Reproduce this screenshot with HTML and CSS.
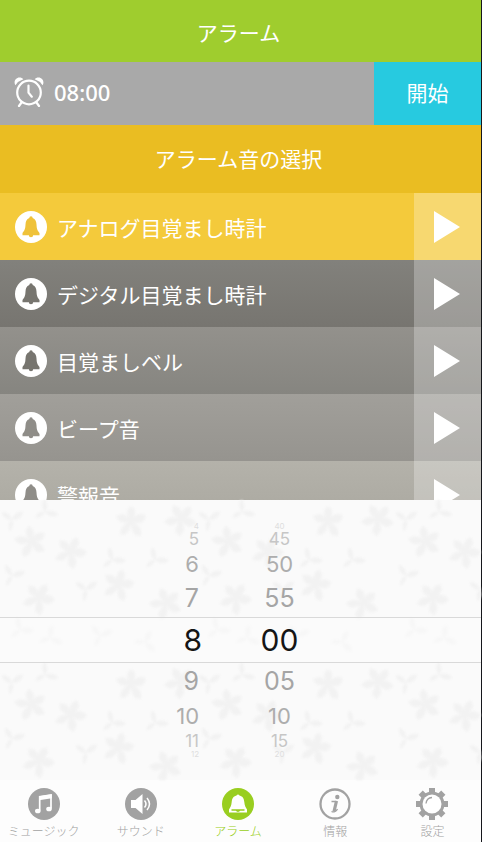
FILE: index.html
```html
<!DOCTYPE html>
<html lang="ja">
<head>
<meta charset="utf-8">
<meta name="viewport" content="width=device-width, initial-scale=1">
<title>アラーム</title>
<link rel="stylesheet" href="styles.css">
</head>
<body>
<svg class="defs" aria-hidden="true">
  <symbol id="bell" viewBox="0 0 32 32">
    <circle cx="16" cy="16" r="16" fill="#fff"/>
    <path fill="currentColor" d="M14.300 7a1.700 1.700 0 0 1 3.400 0c2.700 1.200 3.600 3.300 3.800 6.500.2 4.500 1 6 3 8.500v2.200H7.500V22c2-2.500 2.800-4 3-8.500.2-3.200 1.100-5.300 3.800-6.500zM13.800 24h4.400a2.200 2.200 0 0 1-4.400 0z"/>
  </symbol>
  <symbol id="play" viewBox="0 0 26 32"><path fill="#fff" d="M0 0 26 16 0 32z"/></symbol>
</svg>
<div class="app">
  <header class="title"><h1>アラーム</h1></header>
  <div class="timer">
    <div class="time">
      <svg class="clock" viewBox="0 0 30 30" aria-hidden="true">
        <g fill="none" stroke="#fff" stroke-linecap="round">
          <circle cx="15" cy="15.500" r="11.800" stroke-width="2.200"/>
          <path stroke-width="2.200" d="M14.500 8.500v7.200l3.300 4M7.500 25.500 5 29M22.500 25.500 25 29"/>
        </g>
        <path fill="#fff" d="M1.500 8.200C-.8 5 1.500.5 5.500.5c1.500 0 3 .6 3.800 1.800A15 15 0 0 0 1.500 8.200zM28.500 8.200C30.800 5 28.500.5 24.500.5c-1.500 0-3 .6-3.800 1.800a15 15 0 0 1 7.800 5.900z"/>
      </svg>
      <time>08:00</time>
    </div>
    <button class="start" type="button">開始</button>
  </div>
  <h2 class="heading">アラーム音の選択</h2>
  <ul class="sounds">
    <li class="sound sound-active"><button class="pick" type="button"><svg class="bell"><use href="#bell"/></svg>アナログ目覚まし時計</button><button class="play" type="button" aria-label="再生"><svg><use href="#play"/></svg></button></li>
    <li class="sound sound-dark"><button class="pick" type="button"><svg class="bell"><use href="#bell"/></svg>デジタル目覚まし時計</button><button class="play" type="button" aria-label="再生"><svg><use href="#play"/></svg></button></li>
    <li class="sound sound-mid"><button class="pick" type="button"><svg class="bell"><use href="#bell"/></svg>目覚ましベル</button><button class="play" type="button" aria-label="再生"><svg><use href="#play"/></svg></button></li>
    <li class="sound sound-light"><button class="pick" type="button"><svg class="bell"><use href="#bell"/></svg>ビープ音</button><button class="play" type="button" aria-label="再生"><svg><use href="#play"/></svg></button></li>
    <li class="sound sound-pale"><button class="pick" type="button"><svg class="bell"><use href="#bell"/></svg>警報音</button><button class="play" type="button" aria-label="再生"><svg><use href="#play"/></svg></button></li>
  </ul>
  <section class="picker">
    <svg class="floral" aria-hidden="true">
      <defs>
        <g id="flower">
          <path d="M0-1Q-6-8-3-14L0-17 4-13Q5-6 0-1Q4-9 10-9L15-8 13-2Q8 2 0-1Q8 1 10 7L10 13 4 12Q0 7 0-1Q0 7-5 11L-11 12-10 6Q-7 0 0-1Q-8 1-12-2L-15-7-9-9Q-3-8 0-1z"/>
          <circle r="3"/>
        </g>
        <path id="leaf" d="M0 0C-6 0-10-4-10-8-5-8-1-5 0 0 2-7 7-9 11-8 10-3 6 0 0 0c2 4 1 8-2 11-2-4-2-8 2-11z"/>
        <pattern id="flowers" width="197" height="163" patternUnits="userSpaceOnUse">
          <g fill="#f2f2f2">
            <use href="#flower" x="131" y="23"/>
            <use href="#flower" transform="translate(180 20) rotate(40)"/>
            <use href="#flower" transform="translate(70 53) rotate(25)"/>
            <use href="#flower" transform="translate(30 42) rotate(60)"/>
            <use href="#flower" transform="translate(118 86) rotate(15)"/>
            <use href="#flower" transform="translate(38 99) rotate(30)"/>
            <use href="#flower" transform="translate(165 104) rotate(50)"/>
            <use href="#leaf" x="12" y="20"/>
            <use href="#leaf" transform="translate(45 12) rotate(50)"/>
            <use href="#leaf" transform="translate(12 76) rotate(20)"/>
            <use href="#leaf" x="86" y="90"/>
            <use href="#leaf" transform="translate(112 60) rotate(40)"/>
            <use href="#leaf" transform="translate(100 136) rotate(15)"/>
            <use href="#leaf" transform="translate(145 142) rotate(80)"/>
            <use href="#leaf" transform="translate(50 138) rotate(60)"/>
            <use href="#leaf" transform="translate(20 130) rotate(40)"/>
            <use href="#leaf" transform="translate(155 60) rotate(40)"/>
          </g>
        </pattern>
      </defs>
      <rect width="100%" height="100%" fill="url(#flowers)"/>
    </svg>
    <div class="wheel">
      <div class="row row-edge"><span>4</span><span>40</span></div>
      <div class="row row-far"><span>5</span><span>45</span></div>
      <div class="row row-mid"><span>6</span><span>50</span></div>
      <div class="row row-near"><span>7</span><span>55</span></div>
      <div class="row row-selected"><span>8</span><span>00</span></div>
      <div class="row row-near"><span>9</span><span>05</span></div>
      <div class="row row-mid"><span>10</span><span>10</span></div>
      <div class="row row-far"><span>11</span><span>15</span></div>
      <div class="row row-edge"><span>12</span><span>20</span></div>
    </div>
  </section>
  <nav class="tabs">
    <a class="tab" href="#music"><svg viewBox="0 0 32 32" aria-hidden="true"><circle cx="16" cy="16" r="16" fill="currentColor"/><path fill="none" stroke="#fff" stroke-width="1.700" d="M11.700 22.500V8.800L23 7v13.500"/><path fill="#fff" d="M11 8.300 23.800 6.200v4L11 12.300z"/><ellipse cx="9.800" cy="23" rx="2.800" ry="2.300" fill="#fff"/><ellipse cx="21" cy="21" rx="2.800" ry="2.300" fill="#fff"/></svg>ミュージック</a>
    <a class="tab" href="#sound"><svg viewBox="0 0 32 32" aria-hidden="true"><circle cx="16" cy="16" r="16" fill="currentColor"/><path fill="#fff" d="M6 12h4.500L17.500 6v20l-7-6H6z"/><path fill="none" stroke="#fff" stroke-width="1.500" d="M19.500 12.500q3 3.500 0 7M22 10q5 6 0 12"/></svg>サウンド</a>
    <a class="tab tab-active" href="#alarm" aria-current="page"><svg viewBox="0 0 32 32" aria-hidden="true"><circle cx="16" cy="16" r="16" fill="currentColor"/><path fill="#fff" d="M14.500 7.500q1.500-2 3 0c3.500.8 4.500 3.500 4.800 6.500.3 4 1.500 5.500 2.700 7.500v3H7v-3c1.200-2 2.400-3.500 2.700-7.500.3-3 1.300-5.700 4.800-6.500z"/><path fill="none" stroke="currentColor" stroke-width="1.300" d="M9.500 22h13M14 22q2 2.500 4 0"/></svg>アラーム</a>
    <a class="tab" href="#info"><svg viewBox="0 0 32 32" aria-hidden="true"><circle cx="16" cy="16" r="14.500" fill="none" stroke="currentColor" stroke-width="2.300"/><circle cx="18.300" cy="9" r="2.200" fill="currentColor"/><path fill="none" stroke="currentColor" stroke-width="1.300" d="M12.500 13.500h5M12.500 23.500c2.500 1.300 5-.5 6-2.500"/><path fill="none" stroke="currentColor" stroke-width="3.200" d="M17.500 13 15 23.500"/></svg>情報</a>
    <a class="tab" href="#settings"><svg viewBox="0 0 32 32" aria-hidden="true"><g fill="currentColor"><path id="teeth" d="M13 0h6v32h-6zM0 13h32v6H0z"/><use href="#teeth" transform="rotate(45 16 16)"/><circle cx="16" cy="16" r="12.500"/></g><circle cx="16" cy="16" r="9.500" fill="#fff"/><path fill="none" stroke="currentColor" stroke-width="1.300" d="M10 15.500q.5-5.500 6-6"/></svg>設定</a>
  </nav>
</div>
</body>
</html>
```
FILE: styles.css
```css
* { box-sizing: border-box; }

body {
  margin: 0;
  font-family: "Noto Sans", "Noto Sans CJK JP", sans-serif;
  color: #fff;
}

h1, h2, ul { margin: 0; padding: 0; font-weight: 400; }
button { border: 0; padding: 0; margin: 0; color: inherit; font: inherit; background: none; cursor: pointer; }

.defs { position: absolute; width: 0; height: 0; }

.app {
  display: flex;
  flex-direction: column;
  height: 100vh;
  border-right: 1px solid #16171c;
  background: #fafafa;
}

.title, .heading {
  display: flex;
  align-items: center;
  justify-content: center;
  flex: none;
  padding-right: 4px;
}
.title { height: 62px; padding-top: 4px; background: #9fcd2e; }
.title h1, .heading { font-size: 21px; line-height: 32px; }
.heading { height: 68px; background: #eabd22; }

.timer { display: flex; flex: none; height: 63px; background: #a9a9a9; }
.time { display: flex; flex: 1; align-items: center; gap: 10px; padding-left: 14px; padding-bottom: 4px; font-size: 22px; font-weight: 500; line-height: 32px; }
.clock { width: 30px; height: 30px; }
.start { width: 107px; padding-bottom: 4px; background: #27cae0; font-size: 21px; }

.sounds { flex: 1; min-height: 0; overflow: hidden; list-style: none; }
.sound { display: flex; height: 67px; }
.pick { display: flex; flex: 1; align-items: center; gap: 10px; padding-left: 15px; font-size: 21px; text-align: left; }
.bell { width: 32px; height: 32px; }
.play { display: flex; align-items: center; width: 67px; padding-left: 20px; background: rgba(255, 255, 255, 0.27); }
.play svg { width: 26px; height: 32px; }

.sound-active { background: #f4ca3b; }
.sound-dark { background: linear-gradient(#82817c, #777570); }
.sound-mid { background: linear-gradient(#93918c, #868580); }
.sound-light { background: linear-gradient(#a19f9a, #96948f); }
.sound-pale { background: linear-gradient(#b4b2aa, #a9a79f); }
.sound .bell { color: #77756f; }
.sound-active .bell { color: #efc239; }
.sound-light .bell, .sound-pale .bell { color: #8f8d88; }

.picker { position: relative; flex: none; padding: 22px 0; background: #fafafa; }
.floral { position: absolute; inset: 0; width: 100%; height: 100%; filter: blur(1px); }
.wheel { position: relative; font-family: Inter, sans-serif; color: #a5a5a5; }
.row {
  display: grid;
  grid-template-columns: 42% 21%;
  align-items: center;
}
.row span { padding-right: 3px; text-align: right; }
.row span + span { padding: 0 0 0 54px; text-align: center; }
.row-edge { height: 8px; font-size: 8px; line-height: 8px; color: #dedede; }
.row-far { height: 18px; font-size: 17px; line-height: 18px; color: #c6c6c6; }
.row-mid { height: 32px; font-size: 22px; line-height: 32px; color: #adadad; }
.row-near { height: 37px; font-size: 25px; line-height: 37px; }
.row-selected { height: 46px; border: solid #d9d9d9; border-width: 1px 0; background: rgba(252, 252, 252, 0.5); font-size: 30px; line-height: 44px; color: #151515; }
.row-selected span { padding-right: 0; }

.tabs { display: grid; grid-template-columns: repeat(5, 1fr); flex: none; height: 62px; margin-left: -5px; padding-top: 8px; background: #fdfdfd; }
.tab { display: flex; flex-direction: column; align-items: center; gap: 4px; color: #a2a2a2; font-size: 12px; font-weight: 300; line-height: 16px; text-decoration: none; white-space: nowrap; }
.tab svg { width: 32px; height: 32px; }
.tab-active { color: #99ce20; }
```
